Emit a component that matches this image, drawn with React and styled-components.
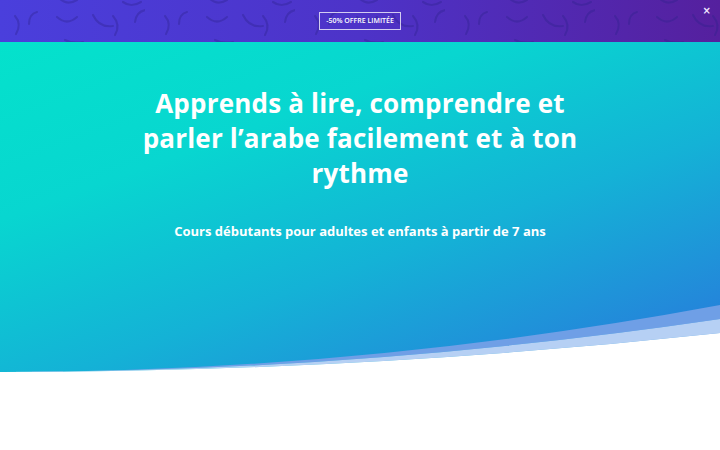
import React from 'react'
import styled, { createGlobalStyle } from 'styled-components'

const GlobalStyle = createGlobalStyle`
    * { box-sizing: border-box; }
    body {
        margin: 0;
        background: #fff;
        font-family: "Open Sans", "Liberation Sans", sans-serif;
    }
`

function ArcPattern() {
    return (
        <PatternSvg width="720" height="42" aria-hidden="true">
            <defs>
                <pattern id="arcs" width="150" height="42" patternUnits="userSpaceOnUse" x="-5">
                    <g fill="none" stroke="#2c1f8a" strokeOpacity="0.35" strokeWidth="2.2" strokeLinecap="round">
                        <path d="M20 16 Q27 24 21 34" />
                        <path d="M42 12 Q34 14 34 24" />
                        <path d="M62 17 Q72 26 82 17" />
                        <path d="M118 16 Q126 25 120 35" />
                        <path d="M98 15 Q104 28 118 26" />
                        <path d="M150 10 Q141 12 140 22" />
                        <path d="M64 -2 Q72 6 82 0" />
                        <path d="M128 2 Q136 8 146 2" />
                        <path d="M70 40 Q78 44 88 42" />
                    </g>
                </pattern>
            </defs>
            <rect width="720" height="42" fill="url(#arcs)" />
        </PatternSvg>
    )
}

function Wave() {
    return (
        <WaveSvg viewBox="0 0 720 80" preserveAspectRatio="none" aria-hidden="true">
            <path d="M0 80 Q360 80 720 13 L720 27 Q360 80 0 80 Z" fill="#6f9fe6" />
            <path d="M0 80 Q360 80 720 27 L720 41 Q360 80 0 80 Z" fill="#b6d0f4" />
            <path d="M0 80 Q360 80 720 41 L720 80 Z" fill="#ffffff" />
        </WaveSvg>
    )
}

export default function App() {
    return (
        <>
            <GlobalStyle />
            <Banner>
                <ArcPattern />
                <OfferButton>-50% offre limitée</OfferButton>
                <Close>×</Close>
            </Banner>
            <Hero>
                <Title>Apprends à lire, comprendre et parler l’arabe facilement et à ton rythme</Title>
                <Subtitle>Cours débutants pour adultes et enfants à partir de 7 ans</Subtitle>
                <Wave />
            </Hero>
            <Blank />
        </>
    )
}

const Banner = styled.div`
    position: relative;
    height: 42px;
    display: flex;
    align-items: center;
    justify-content: center;
    overflow: hidden;
    background: linear-gradient(90deg, #4a3fdc 0%, #4d33c8 50%, #55209e 100%);
`

const PatternSvg = styled.svg`
    position: absolute;
    inset: 0;
`

const OfferButton = styled.button`
    position: relative;
    height: 18px;
    padding: 0 6px;
    border: 1px solid rgba(255, 255, 255, 0.75);
    background: transparent;
    color: #fff;
    font-family: "Open Sans", sans-serif;
    font-weight: 600;
    font-size: 7px;
    letter-spacing: 0;
    text-transform: uppercase;
    margin-top: -1px;
`

const Close = styled.span`
    position: absolute;
    right: 9px;
    top: 5px;
    color: #f2e6ff;
    font-family: "DejaVu Sans", sans-serif;
    font-weight: 700;
    font-size: 10px;
`

const Hero = styled.section`
    position: relative;
    height: 330px;
    display: flex;
    flex-direction: column;
    align-items: center;
    padding-top: 44px;
    background: linear-gradient(160deg, #04e2cc 0%, #08d6d0 30%, #14b2d6 60%, #2a74dc 100%);
    overflow: hidden;
`

const Title = styled.h1`
    margin: 0;
    width: 450px;
    text-align: center;
    color: #fff;
    font-family: "Open Sans", sans-serif;
    font-weight: 700;
    font-size: 26px;
    line-height: 35px;
    letter-spacing: 0.2px;
`

const Subtitle = styled.p`
    margin: 30px 0 0;
    color: #fff;
    font-family: "Open Sans", sans-serif;
    font-weight: 700;
    font-size: 13px;
    line-height: 20px;
`

const WaveSvg = styled.svg`
    position: absolute;
    left: 0;
    bottom: 0;
    width: 100%;
    height: 80px;
    display: block;
`

const Blank = styled.div`
    height: 78px;
    background: #fff;
`
